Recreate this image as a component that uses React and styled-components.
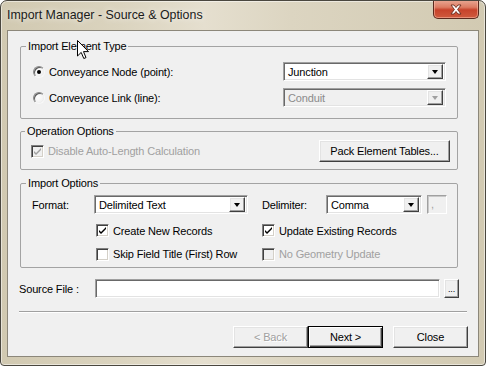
import React from "react";
import styled, { createGlobalStyle, css } from "styled-components";

const GlobalStyle = createGlobalStyle`
  html, body {
    margin: 0;
    padding: 0;
    background: #ffffff;
  }
  body {
    font-family: "Liberation Sans", Arial, sans-serif;
    font-size: 11px;
    letter-spacing: -0.15px;
    color: #000;
  }
`;

const Window = styled.div`
  position: relative;
  width: 486px;
  height: 366px;
  box-sizing: border-box;
  border: 1px solid #4a473f;
  border-radius: 7px 7px 4px 4px;
  background: linear-gradient(
    90deg,
    #d1c9b1 0%,
    #dbd4bf 25%,
    #e5dfcf 42%,
    #dcd5c1 60%,
    #d2cab2 100%
  );
  box-shadow: inset 0 0 0 1px rgba(255, 255, 255, 0.5);
  display: flex;
  flex-direction: column;
  overflow: hidden;
`;

const TitleBar = styled.div`
  height: 29px;
  flex: none;
  display: flex;
  justify-content: space-between;
  align-items: flex-start;
`;

const Title = styled.div`
  padding: 7px 0 0 6px;
  font-size: 12.4px;
  letter-spacing: 0;
  line-height: 15px;
  color: #1b1b1b;
  text-shadow: 0 0 6px rgba(255, 255, 255, 0.9);
`;

const CloseButton = styled.div`
  width: 46px;
  height: 19px;
  margin: -1px 6px 0 0;
  box-sizing: border-box;
  border: 1px solid #5b2a1e;
  border-top: none;
  border-radius: 0 0 5px 5px;
  background: linear-gradient(
    180deg,
    #e9a995 0%,
    #dc7c63 40%,
    #c7432b 55%,
    #cf5a3e 100%
  );
  box-shadow: inset 0 0 0 1px rgba(255, 200, 180, 0.5);
  display: flex;
  align-items: center;
  justify-content: center;
`;

const Client = styled.div`
  flex: 1;
  margin: 0 6px 8px 6px;
  border: 1px solid #8c877a;
  background: #f0f0f0;
  padding: 0 10px 0 11px;
  display: flex;
  flex-direction: column;
`;

const Group = styled.fieldset`
  margin: ${(p) => p.$top}px 0 0 1px;
  width: 438px;
  box-sizing: border-box;
  border: 1px solid #a3a3a3;
  border-radius: 2px;
  padding: ${(p) => p.$pad};
  min-width: 0;
`;

const Legend = styled.legend`
  margin-left: ${(p) => p.$offset}px;
  padding: 0 2px;
  line-height: 13px;
`;

const TypeRow = styled.div`
  height: 19px;
  display: flex;
  align-items: center;
  justify-content: space-between;
  & + & {
    margin-top: 7px;
  }
`;

const Choice = styled.label`
  display: flex;
  align-items: center;
  gap: 4px;
  color: ${(p) => (p.$disabled ? "#a0a0a0" : "#000")};
`;

const Radio = styled.span`
  width: 12px;
  height: 12px;
  box-sizing: border-box;
  border-radius: 50%;
  border: 1px solid;
  border-color: #8a8a8a #f8f8f8 #f8f8f8 #8a8a8a;
  background: radial-gradient(circle at 40% 40%, #ffffff 0%, #f2f2f2 60%, #dcdcdc 100%);
  box-shadow: inset 1px 1px 0 #5a5a5a;
  display: flex;
  align-items: center;
  justify-content: center;
  &::after {
    content: "";
    width: 4px;
    height: 4px;
    border-radius: 50%;
    background: #000;
    display: ${(p) => (p.$checked ? "block" : "none")};
  }
`;

const CheckBox = styled.span`
  width: 13px;
  height: 13px;
  box-sizing: border-box;
  flex: none;
  border: 1px solid;
  border-color: #808080 #ffffff #ffffff #808080;
  box-shadow: inset 1px 1px 0 #404040, inset -1px -1px 0 #d4d0c8;
  background: ${(p) => (p.$disabled ? "#f0f0f0" : "#fff")};
  display: flex;
  align-items: center;
  justify-content: center;
`;

const ComboBox = styled.div`
  width: ${(p) => p.$width}px;
  height: 19px;
  box-sizing: border-box;
  border: 1px solid;
  border-color: #a0a0a0 #ffffff #ffffff #a0a0a0;
  box-shadow: inset 1px 1px 0 #696969, inset -1px -1px 0 #e3e3e3;
  background: ${(p) => (p.$disabled ? "#f0f0f0" : "#fff")};
  color: ${(p) => (p.$disabled ? "#8b8b8b" : "#000")};
  display: flex;
  align-items: center;
  padding: 2px;
`;

const ComboText = styled.span`
  flex: 1;
  padding-left: 2px;
  white-space: nowrap;
  overflow: hidden;
`;

const raised = css`
  box-sizing: border-box;
  background: #f0f0f0;
  border: 1px solid;
  border-color: #ffffff #404040 #404040 #ffffff;
  box-shadow: inset -1px -1px 0 #a0a0a0, inset 1px 1px 0 #e3e3e3;
`;

const DropButton = styled.span`
  ${raised};
  width: 16px;
  height: 15px;
  flex: none;
  display: flex;
  align-items: center;
  justify-content: center;
`;

const Arrow = styled.span`
  width: 0;
  height: 0;
  border-left: 3.5px solid transparent;
  border-right: 3.5px solid transparent;
  border-top: 4px solid ${(p) => (p.$disabled ? "#a0a0a0" : "#000")};
  margin-top: 1px;
`;

const Combo = ({ value, width, disabled }) => (
  <ComboBox $width={width} $disabled={disabled}>
    <ComboText>{value}</ComboText>
    <DropButton>
      <Arrow $disabled={disabled} />
    </DropButton>
  </ComboBox>
);

const Check = ({ checked, disabled }) => (
  <CheckBox $disabled={disabled}>
    {checked && (
      <svg width="9" height="9" viewBox="0 0 9 9">
        <path
          d="M1 4 L3 6 L8 1 L8 3 L3 8 L1 6 Z"
          fill={disabled ? "#a0a0a0" : "#000"}
        />
      </svg>
    )}
  </CheckBox>
);

const OpRow = styled.div`
  display: flex;
  align-items: center;
  justify-content: space-between;
`;

const Button = styled.div`
  ${raised};
  width: ${(p) => p.$width}px;
  height: ${(p) => p.$height || 22}px;
  display: flex;
  align-items: center;
  justify-content: center;
  color: ${(p) => (p.$disabled ? "#a0a0a0" : "#000")};
  text-shadow: ${(p) => (p.$disabled ? "1px 1px 0 #fff" : "none")};
  ${(p) =>
    p.$default &&
    css`
      border: 1px solid #000;
      box-shadow: inset 1px 1px 0 #fff, inset -1px -1px 0 #404040,
        inset -2px -2px 0 #a0a0a0;
    `}
`;

const OptionsGrid = styled.div`
  display: grid;
  grid-template-columns: 62px 168px 64px auto;
  grid-template-rows: 19px 16px 16px;
  row-gap: 8px;
  align-items: center;
`;

const GridLabel = styled.span`
  grid-column: ${(p) => p.$col};
`;

const DelimiterCell = styled.div`
  display: flex;
  gap: 5px;
  align-items: center;
`;

const SmallBox = styled.div`
  width: 20px;
  height: 19px;
  box-sizing: border-box;
  border: 1px solid;
  border-color: #a0a0a0 #ffffff #ffffff #a0a0a0;
  box-shadow: inset 1px 1px 0 #c8c8c8;
  background: #f0f0f0;
  color: #a0a0a0;
  padding: 2px 0 0 3px;
  line-height: 13px;
`;

const OptionCheck = styled(Choice)`
  grid-column: ${(p) => p.$col};
  grid-row: ${(p) => p.$row};
  margin-left: ${(p) => p.$indent || 0}px;
  margin-top: ${(p) => p.$shift || 0}px;
`;

const SourceRow = styled.div`
  margin-top: 11px;
  display: flex;
  align-items: center;
  height: 19px;
`;

const SourceLabel = styled.span`
  width: 76px;
  flex: none;
`;

const TextInput = styled.div`
  width: 345px;
  height: 19px;
  box-sizing: border-box;
  border: 1px solid;
  border-color: #a0a0a0 #ffffff #ffffff #a0a0a0;
  box-shadow: inset 1px 1px 0 #696969, inset -1px -1px 0 #e3e3e3;
  background: #fff;
`;

const BrowseButton = styled(Button)`
  margin-left: 4px;
  font-size: 9px;
  align-items: flex-end;
  padding-bottom: 3px;
`;

const Separator = styled.div`
  margin-top: 13px;
  width: 448px;
  height: 1px;
  background: #a0a0a0;
  border-bottom: 1px solid #fff;
`;

const Footer = styled.div`
  margin-top: 13px;
  display: flex;
  justify-content: flex-end;
  gap: 0;
`;

const FooterGap = styled.span`
  width: 10px;
`;

const Cursor = styled.svg`
  position: absolute;
  left: 76px;
  top: 39px;
`;

export default function App() {
  return (
    <>
      <GlobalStyle />
      <Window>
        <TitleBar>
          <Title>Import Manager - Source &amp; Options</Title>
          <CloseButton>
            <svg width="14" height="11" viewBox="0 0 14 11">
              <path
                d="M2 1 L5 1 L7 3.5 L9 1 L12 1 L8.6 5.5 L12 10 L9 10 L7 7.5 L5 10 L2 10 L5.4 5.5 Z"
                fill="#fff"
                stroke="#6a2a1c"
                strokeWidth="0.9"
                strokeLinejoin="round"
              />
            </svg>
          </CloseButton>
        </TitleBar>
        <Client>
          <Group $top={9} $pad="9px 11px 11px 12px">
            <Legend $offset={-7}>Import Element Type</Legend>
            <TypeRow>
              <Choice>
                <Radio $checked />
                Conveyance Node (point):
              </Choice>
              <Combo value="Junction" width={163} />
            </TypeRow>
            <TypeRow>
              <Choice>
                <Radio />
                Conveyance Link (line):
              </Choice>
              <Combo value="Conduit" width={163} disabled />
            </TypeRow>
          </Group>

          <Group $top={6} $pad="2px 7px 7px 10px">
            <Legend $offset={-6}>Operation Options</Legend>
            <OpRow>
              <Choice $disabled>
                <Check checked disabled />
                Disable Auto-Length Calculation
              </Choice>
              <Button $width={131}>Pack Element Tables...</Button>
            </OpRow>
          </Group>

          <Group $top={7} $pad="5px 10px 5px 11px">
            <Legend $offset={-6}>Import Options</Legend>
            <OptionsGrid>
              <GridLabel $col={1}>Format:</GridLabel>
              <Combo value="Delimited Text" width={154} />
              <GridLabel $col={3}>Delimiter:</GridLabel>
              <DelimiterCell>
                <Combo value="Comma" width={96} />
                <SmallBox>,</SmallBox>
              </DelimiterCell>
              <OptionCheck $col={2} $row={2} $indent={2} $shift={1}>
                <Check checked />
                Create New Records
              </OptionCheck>
              <OptionCheck $col="3 / 5" $row={2} $shift={1}>
                <Check checked />
                Update Existing Records
              </OptionCheck>
              <OptionCheck $col={2} $row={3} $indent={2}>
                <Check />
                Skip Field Title (First) Row
              </OptionCheck>
              <OptionCheck $col="3 / 5" $row={3} $disabled>
                <Check disabled />
                No Geometry Update
              </OptionCheck>
            </OptionsGrid>
          </Group>

          <SourceRow>
            <SourceLabel>Source File :</SourceLabel>
            <TextInput />
            <BrowseButton $width={15} $height={19}>
              ...
            </BrowseButton>
          </SourceRow>

          <Separator />

          <Footer>
            <Button $width={75} $disabled>
              &lt; Back
            </Button>
            <Button $width={75} $default>
              Next &gt;
            </Button>
            <FooterGap />
            <Button $width={75}>Close</Button>
          </Footer>
        </Client>
        <Cursor width="13" height="20" viewBox="0 0 13 20">
          <path
            d="M0.5 0.5 L0.5 16 L4.2 12.4 L6.8 18.5 L9 17.6 L6.5 11.6 L11.5 11.6 Z"
            fill="#fff"
            stroke="#000"
            strokeWidth="1"
            strokeLinejoin="miter"
          />
        </Cursor>
      </Window>
    </>
  );
}
